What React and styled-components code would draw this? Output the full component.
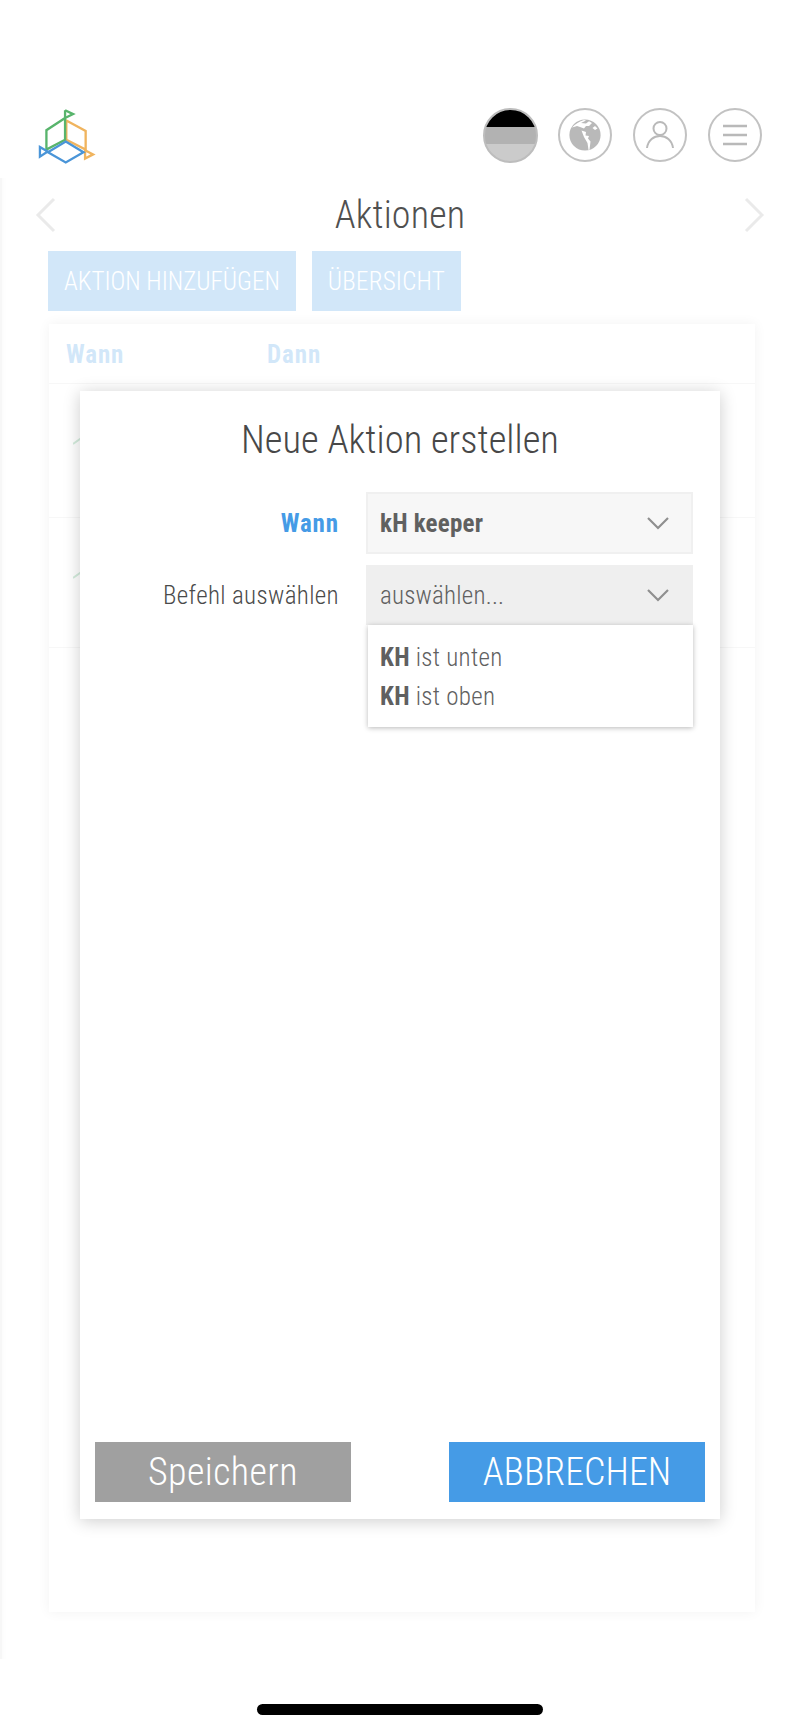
import React from 'react';
import styled, { createGlobalStyle } from 'styled-components';

const Global = createGlobalStyle`
  html, body { margin: 0; padding: 0; background: #fff; }
  body { font-family: "Roboto", "Liberation Sans", sans-serif; font-stretch: 75%; }
`;
const Page = styled.div`
  width: 800px; height: 1732px; display: flex; flex-direction: column; overflow: hidden; background: #fff;
`;
const Header = styled.header`
  height: 178px; box-sizing: border-box; padding: 108px 38px 0 38px;
  display: flex; justify-content: space-between; align-items: flex-start; flex: none;
`;
const Logo = styled.svg`width: 58px; height: 58px; display: block;`;
const IconRow = styled.div`display: flex; gap: 21px;`;
const RoundIcon = styled.div`
  width: 54px; height: 54px; box-sizing: border-box; border-radius: 50%;
  border: 2px solid #c2c2c2; color: #b9b9b9; display: flex; align-items: center; justify-content: center;
`;
const FlagIcon = styled.svg`width: 55px; height: 55px; display: block; margin-right: -1px;`;
const Panel = styled.main`
  position: relative; height: 1481px; flex: none; box-sizing: border-box;
  box-shadow: inset 2px 0 0 #ddd, inset 7px 0 6px -5px rgba(0,0,0,.12);
`;
const TitleRow = styled.div`
  height: 73px; display: flex; align-items: center; justify-content: space-between; padding: 0 34px;
`;
const PageTitle = styled.h1`
  position: relative; z-index: 1; margin: 0; font-size: 38px; font-weight: 300; color: #505050; line-height: 1; letter-spacing: .2px;
`;
const Actions = styled.div`display: flex; gap: 16px; padding-left: 48px;`;
const ActionButton = styled.button`
  height: 60px; padding: 0 16px; border: 0; background: #459be6; color: #fff; font: inherit;
  font-stretch: 75%; font-size: 25px; font-weight: 300; border-radius: 0; white-space: nowrap;
  letter-spacing: ${p => p.$spaced ? '.25px' : '0'};
`;
const Card = styled.section`
  margin: 13px 45px 0 49px; height: 1288px; background: #fff; box-shadow: 0 0 12px rgba(0,0,0,.22);
`;
const TableHead = styled.div`
  height: 60px; box-sizing: border-box; display: flex; align-items: center; padding: 2px 0 0 17px;
  border-bottom: 1px solid #ddd; font-size: 25px; font-weight: 700; color: #459be6; letter-spacing: .9px;
`;
const HeadCell = styled.span`width: 201px;`;
const TableRow = styled.div`
  height: ${p => p.$h}px; box-sizing: border-box; border-bottom: 1px solid #ddd; padding: 46px 0 0 24px;
`;
const Overlay = styled.div`position: absolute; inset: 0; background: rgba(255,255,255,.76);`;
const Modal = styled.div`
  position: absolute; left: 80px; top: 213px; width: 640px; height: 1128px; box-sizing: border-box;
  background: #fff; box-shadow: 0 2px 16px rgba(0,0,0,.2); display: flex; flex-direction: column;
  padding: 28px 15px 17px;
`;
const ModalTitle = styled.h2`
  margin: 0 0 31px; height: 42px; text-align: center; font-size: 38.6px; line-height: 42px; font-weight: 300; color: #484848;
`;
const FormRow = styled.div`
  display: flex; align-items: center; height: ${p => p.$h}px; margin-bottom: 11px; padding-right: 12px; position: relative;
`;
const Label = styled.label`
  width: 244px; flex: none; text-align: right; font-size: 25px; font-weight: ${p => p.$active ? 700 : 300};
  color: ${p => p.$active ? '#459be6' : '#4a4a4a'}; letter-spacing: ${p => p.$active ? '.9px' : '.35px'};
`;
const Select = styled.div`
  margin-left: 27px; flex: 1; align-self: stretch; box-sizing: border-box; display: flex; align-items: center;
  justify-content: space-between; padding: 0 ${p => p.$open ? 23 : 21}px 0 ${p => p.$open ? 14 : 12}px; font-size: 25px;
  background: ${p => p.$open ? '#efefef' : '#f7f7f7'};
  border: ${p => p.$open ? '0' : '2px solid #f0f0f0'};
  font-weight: ${p => p.$open ? 300 : 700}; color: #606060; letter-spacing: .2px;
`;
const Menu = styled.ul`
  position: absolute; top: 100%; left: 273px; right: 12px; margin: 0; padding: 13px 12px 11px; list-style: none; background: #fff;
  box-shadow: 0 1px 5px rgba(0,0,0,.28); font-size: 25px; font-weight: 300; color: #606060; z-index: 2; letter-spacing: .3px;
`;
const MenuItem = styled.li`
  height: 39px; line-height: 39px; b { font-weight: 700; }
`;
const Spacer = styled.div`flex: 1;`;
const Footer = styled.div`display: flex; justify-content: space-between;`;
const BigButton = styled.button`
  width: 256px; height: 60px; border: 0; border-radius: 0; padding: 0; color: #fff; font: inherit; font-stretch: 75%;
  font-size: 38px; font-weight: 300; background: ${p => p.$primary ? '#459be6' : '#a0a0a0'};
  letter-spacing: ${p => p.$primary ? '0' : '.4px'};
`;
const HomeBar = styled.div`
  width: 286px; height: 11px; border-radius: 6px; background: #000; margin: 45px auto 0;
`;

const Chevron = ({ dir }) => (
  <svg width="24" height="36" viewBox="0 0 24 36" fill="none" stroke="#a8a8a8" strokeWidth="3">
    <path d={dir === 'left' ? 'M20 2 L4 18 L20 34' : 'M4 2 L20 18 L4 34'} />
  </svg>
);
const Down = () => (
  <svg width="24" height="14" viewBox="0 0 24 14" fill="none" stroke="#8f8f8f" strokeWidth="2.2"><path d="M2 2 L12 12 L22 2" /></svg>
);
const Tick = () => (
  <svg width="16" height="12" viewBox="0 0 16 12" fill="none" stroke="#4caf70" strokeWidth="2"><path d="M0 11 L14 1" /></svg>
);
const Globe = () => (
  <svg width="32" height="32" viewBox="0 0 32 32" fill="none">
    <circle cx="16" cy="16" r="15.6" fill="#b9b9b9" />
    <path
      fill="#fff"
      d="M3 8.5 Q8 3 15 1 L17 1.5 L12 4 L17 4.5 L20 2.2 L23 4 L20 7 L17 7 L15 9.5 L11 8 L8 7 Q6 7.5 3 8.5 Z
         M12.5 11.5 L17 13 L16.5 16.5 L20 17 L19 19.5 L21.5 22.5 L20.5 30.8 L19.5 31 L18.5 24 L15 18 Z
         M26 7 L28.5 9.5 L26 11 L23.5 9 Z"
    />
  </svg>
);

export default function App() {
  return (
    <Page>
      <Global />
      <Header>
        <Logo viewBox="0 0 60 58" fill="none" strokeWidth="2.4" strokeLinejoin="miter">
          <g stroke="#f0b45e">
            <path d="M29.3 12 L49.3 22.7 V42 L29.3 32 Z" />
            <path d="M48.7 42.7 L57 47 L48.7 51.3 Z" />
          </g>
          <g stroke="#58b46c">
            <path d="M28 1.3 V32 L8.7 42 V22 L28 9.3" />
            <path d="M28 1.3 L36.3 5.3 L28 9.3" />
          </g>
          <g stroke="#4a95d8">
            <path d="M28.7 33.7 L47 44.7 L28.7 55.3 L10.3 44.7 Z" />
            <path d="M2 39.3 L10 44 L2 49.3 Z" />
          </g>
        </Logo>
        <IconRow>
          <FlagIcon viewBox="0 0 55 55">
            <defs><clipPath id="flag"><circle cx="27.5" cy="27.5" r="26.5" /></clipPath></defs>
            <g clipPath="url(#flag)">
              <rect width="55" height="19" fill="#000" />
              <rect y="19" width="55" height="17" fill="#b2b2b2" />
              <rect y="36" width="55" height="19" fill="#cbcbcb" />
            </g>
            <circle cx="27.5" cy="27.5" r="26.5" fill="none" stroke="#bdbdbd" strokeWidth="2" />
          </FlagIcon>
          <RoundIcon><Globe /></RoundIcon>
          <RoundIcon>
            <svg width="30" height="30" viewBox="0 0 30 30" fill="none" stroke="#b9b9b9" strokeWidth="2">
              <circle cx="15" cy="8.5" r="6.5" />
              <path d="M2 28 C3 20 9 16 15 16 C21 16 27 20 28 28" />
            </svg>
          </RoundIcon>
          <RoundIcon>
            <svg width="26" height="22" viewBox="0 0 26 22" fill="none" stroke="#b9b9b9" strokeWidth="2.4">
              <path d="M1 2 H25 M1 11 H25 M1 20 H25" />
            </svg>
          </RoundIcon>
        </IconRow>
      </Header>
      <Panel>
        <TitleRow>
          <Chevron dir="left" />
          <PageTitle>Aktionen</PageTitle>
          <Chevron dir="right" />
        </TitleRow>
        <Actions>
          <ActionButton>AKTION HINZUFÜGEN</ActionButton>
          <ActionButton $spaced>ÜBERSICHT</ActionButton>
        </Actions>
        <Card>
          <TableHead>
            <HeadCell>Wann</HeadCell>
            <HeadCell>Dann</HeadCell>
          </TableHead>
          <TableRow $h={134}><Tick /></TableRow>
          <TableRow $h={130}><Tick /></TableRow>
        </Card>
        <Overlay />
        <Modal>
          <ModalTitle>Neue Aktion erstellen</ModalTitle>
          <FormRow $h={62}>
            <Label $active>Wann</Label>
            <Select>kH keeper <Down /></Select>
          </FormRow>
          <FormRow $h={60}>
            <Label>Befehl auswählen</Label>
            <Select $open>auswählen... <Down /></Select>
            <Menu>
              <MenuItem><b>KH</b> ist unten</MenuItem>
              <MenuItem><b>KH</b> ist oben</MenuItem>
            </Menu>
          </FormRow>
          <Spacer />
          <Footer>
            <BigButton>Speichern</BigButton>
            <BigButton $primary>ABBRECHEN</BigButton>
          </Footer>
        </Modal>
      </Panel>
      <HomeBar />
    </Page>
  );
}
